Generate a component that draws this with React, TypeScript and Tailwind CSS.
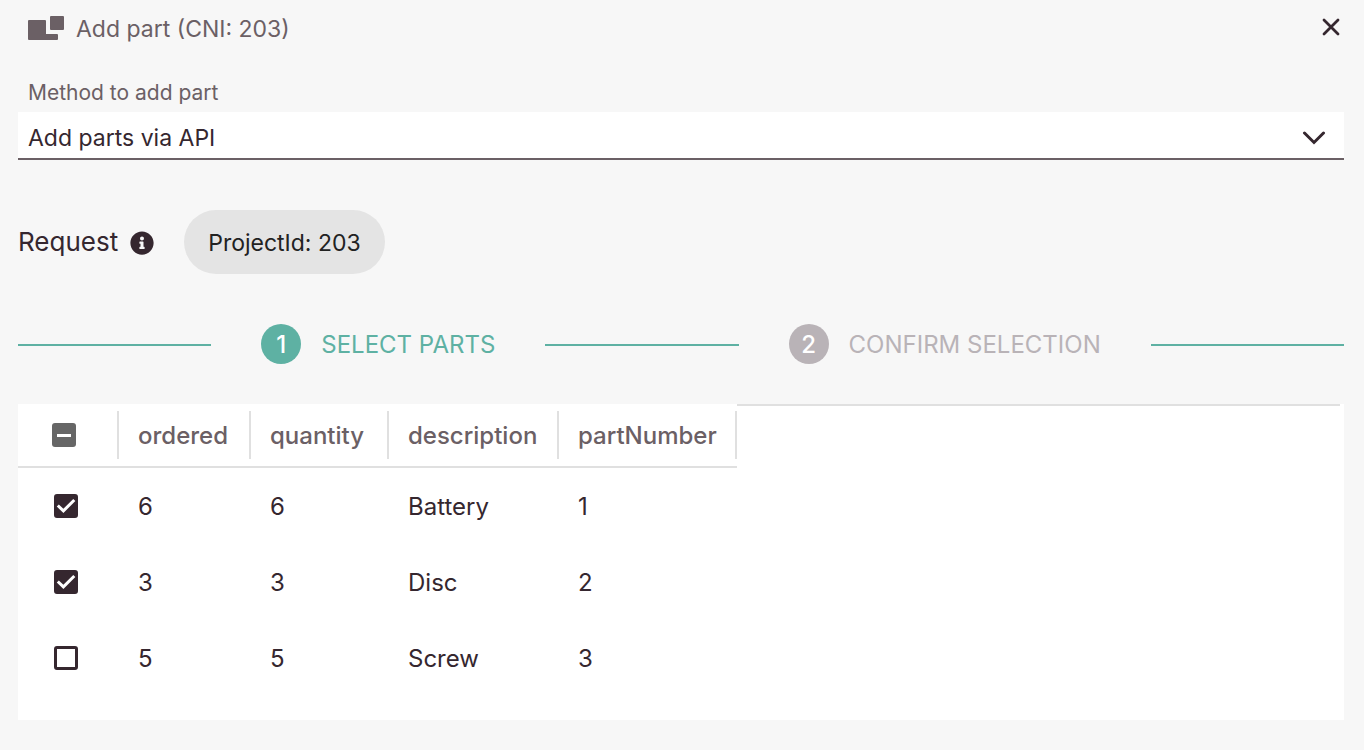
import { useState } from 'react';
import type { InputHTMLAttributes } from 'react';
import { FaInfoCircle } from 'react-icons/fa';

interface Part {
  ordered: number;
  quantity: number;
  description: string;
  partNumber: number;
}

const parts: Part[] = [
  { ordered: 6, quantity: 6, description: 'Battery', partNumber: 1 },
  { ordered: 3, quantity: 3, description: 'Disc', partNumber: 2 },
  { ordered: 5, quantity: 5, description: 'Screw', partNumber: 3 },
];

const columns: { key: keyof Part; width: string }[] = [
  { key: 'ordered', width: 'w-[132px]' },
  { key: 'quantity', width: 'w-[138px]' },
  { key: 'description', width: 'w-[170px]' },
  { key: 'partNumber', width: 'w-[178px]' },
];

const Checkbox = ({ className, ...props }: InputHTMLAttributes<HTMLInputElement>) => (
  <span className="grid size-6">
    <input
      type="checkbox"
      className={`peer col-start-1 row-start-1 size-6 appearance-none rounded-[3px] ${className}`}
      {...props}
    />
    <svg
      viewBox="0 0 24 24"
      className="pointer-events-none col-start-1 row-start-1 hidden size-6 peer-checked:block"
      fill="none"
      stroke="white"
      strokeWidth="3"
    >
      <path d="M3.8 11.5l5.6 5.4L20.3 6" />
    </svg>
  </span>
);

const StepLine = () => <span className="mt-0.5 h-0.5 flex-1 bg-[#5eb1a3]" />;

export default function App() {
  const [selected, setSelected] = useState([1, 2]);

  const toggle = (id: number) => {
    setSelected(selected.includes(id) ? selected.filter((s) => s !== id) : [...selected, id]);
  };

  const toggleAll = () => {
    setSelected(selected.length === parts.length ? [] : parts.map((p) => p.partNumber));
  };

  return (
    <div className="min-h-screen bg-[#f7f7f7] pr-5 pb-[30px] pl-[18px] font-['Inter',sans-serif] text-[23px] leading-8 text-[#35272f]">
      {/* title bar */}
      <header className="flex h-[58px] items-center justify-between pl-2.5">
        <h1 className="flex items-center gap-3 text-[#6b6065]">
          <svg viewBox="0 0 36 26" className="h-[26px] w-9" fill="currentColor">
            <path d="M1 4h16a1 1 0 0 1 1 1v13h11a1 1 0 0 1 1 1v4a1 1 0 0 1-1 1H1a1 1 0 0 1-1-1V5a1 1 0 0 1 1-1z" />
            <rect x="22" width="14" height="14" rx="1" />
          </svg>
          Add part (CNI: 203)
        </h1>
        <button type="button" aria-label="Close" className="pr-1 pb-1">
          <svg viewBox="0 0 18 18" className="size-[18px]" fill="none" stroke="currentColor" strokeWidth="2.8" strokeLinecap="round">
            <path d="M2 2l14 14M16 2L2 16" />
          </svg>
        </button>
      </header>

      {/* method */}
      <label htmlFor="method" className="block pt-[19px] pb-[3px] pl-2.5 text-[21px] leading-8 text-[#6b6065]">
        Method to add part
      </label>
      <div className="grid items-center border-b-2 border-[#6b6065] bg-white">
        <select id="method" className="col-start-1 row-start-1 h-[46px] appearance-none pt-1.5 pr-14 pl-2.5">
          <option>Add parts via API</option>
        </select>
        <svg
          viewBox="0 0 24 14"
          className="pointer-events-none col-start-1 row-start-1 mt-1.5 mr-[18px] h-3.5 w-6 justify-self-end"
          fill="none"
          stroke="currentColor"
          strokeWidth="3"
          strokeLinecap="round"
        >
          <path d="M2.5 2L12 11.5L21.5 2" />
        </svg>
      </div>

      {/* request */}
      <div className="mt-[50px] flex items-center">
        <span className="text-[26px] leading-8">Request</span>
        <FaInfoCircle className="mt-0.5 ml-3 size-6" />
        <span className="ml-[30px] rounded-full bg-[#e4e4e4] px-6 pt-[17px] pb-[15px] text-[#222]">ProjectId: 203</span>
      </div>

      {/* steps */}
      <ol className="mt-[50px] flex items-center gap-[50px] text-[24px] leading-8">
        <StepLine />
        <li className="flex items-center gap-5 text-[#5eb1a3]">
          <span className="flex size-10 items-center justify-center rounded-full bg-[#5eb1a3] pt-0.5 font-medium text-white">1</span>
          <span className="pt-0.5">SELECT PARTS</span>
        </li>
        <StepLine />
        <li className="flex items-center gap-5 text-[#b9b3b7]">
          <span className="flex size-10 items-center justify-center rounded-full bg-[#b9b3b7] pt-0.5 font-medium text-white">2</span>
          <span className="pt-0.5">CONFIRM SELECTION</span>
        </li>
        <StepLine />
      </ol>

      {/* parts */}
      <div className="mt-10 flex bg-white pb-6">
        <table className="w-[719px] table-fixed border-separate border-spacing-0 text-left text-[24px] leading-8">
          <thead>
            <tr>
              <th className="h-16 w-[101px] border-b-2 border-[#e0e0e0] p-0">
                <div className="flex h-12 items-center border-r-2 border-[#e0e0e0] pl-[34px]">
                  <span className="grid size-6 place-items-center">
                    <input
                      type="checkbox"
                      aria-label="Select all parts"
                      checked={selected.length === parts.length}
                      onChange={toggleAll}
                      className="col-start-1 row-start-1 size-6 appearance-none rounded-[3px] bg-[#666]"
                    />
                    <span className="pointer-events-none col-start-1 row-start-1 h-[3px] w-3.5 bg-white" />
                  </span>
                </div>
              </th>
              {columns.map(({ key, width }) => (
                <th key={key} scope="col" className={`${width} h-16 border-b-2 border-[#e0e0e0] p-0 font-medium text-[#6b6065]`}>
                  <div className="flex h-12 items-center border-r-2 border-[#e0e0e0] pt-0.5 pl-[19px]">{key}</div>
                </th>
              ))}
            </tr>
          </thead>
          <tbody>
            {parts.map((part) => (
              <tr key={part.partNumber}>
                <td className="h-[76px] p-0 pl-9">
                  <Checkbox
                    aria-label={`Select ${part.description}`}
                    checked={selected.includes(part.partNumber)}
                    onChange={() => toggle(part.partNumber)}
                    className="border-[3px] border-[#35272f] checked:bg-[#35272f]"
                  />
                </td>
                {columns.map(({ key }) => (
                  <td key={key} className="p-0 pt-0.5 pl-[19px]">
                    {part[key]}
                  </td>
                ))}
              </tr>
            ))}
          </tbody>
        </table>
        <div className="mr-1 flex-1 border-t-2 border-[#e0e0e0]" />
      </div>
    </div>
  );
}
